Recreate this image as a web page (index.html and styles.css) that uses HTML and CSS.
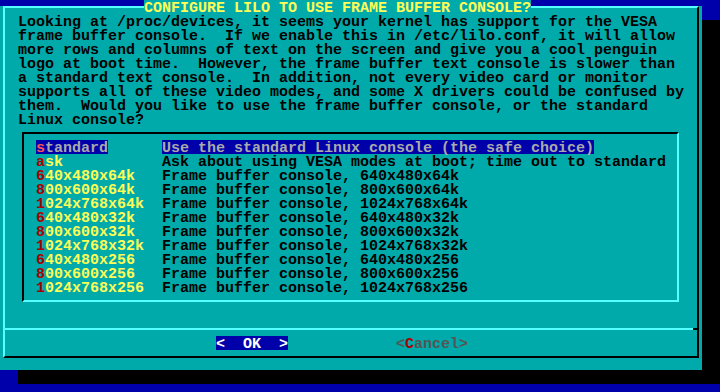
FILE: index.html
```html
<!DOCTYPE html>
<html lang="en">
<head>
  <meta charset="UTF-8">
  <title>Configure LILO</title>
  <link rel="stylesheet" href="styles.css">
</head>
<body>
  <div class="screen">
    <div class="dialog">
      <div class="frame">
        <h1 class="title">CONFIGURE LILO TO USE FRAME BUFFER CONSOLE?</h1>

        <div class="body">
          <p class="prompt">Looking at /proc/devices, it seems your kernel has support for the VESA
frame buffer console.  If we enable this in /etc/lilo.conf, it will allow
more rows and columns of text on the screen and give you a cool penguin
logo at boot time.  However, the frame buffer text console is slower than
a standard text console.  In addition, not every video card or monitor
supports all of these video modes, and some X drivers could be confused by
them.  Would you like to use the frame buffer console, or the standard
Linux console?</p>

          <div class="menu">
            <ul class="items">
              <li class="item selected"><span class="tag"><span class="label"><b class="key">s</b>tandard</span></span><span class="desc">Use the standard Linux console (the safe choice)</span></li>
              <li class="item"><span class="tag"><span class="label"><b class="key">a</b>sk</span></span><span class="desc">Ask about using VESA modes at boot; time out to standard</span></li>
              <li class="item"><span class="tag"><span class="label"><b class="key">6</b>40x480x64k</span></span><span class="desc">Frame buffer console, 640x480x64k</span></li>
              <li class="item"><span class="tag"><span class="label"><b class="key">8</b>00x600x64k</span></span><span class="desc">Frame buffer console, 800x600x64k</span></li>
              <li class="item"><span class="tag"><span class="label"><b class="key">1</b>024x768x64k</span></span><span class="desc">Frame buffer console, 1024x768x64k</span></li>
              <li class="item"><span class="tag"><span class="label"><b class="key">6</b>40x480x32k</span></span><span class="desc">Frame buffer console, 640x480x32k</span></li>
              <li class="item"><span class="tag"><span class="label"><b class="key">8</b>00x600x32k</span></span><span class="desc">Frame buffer console, 800x600x32k</span></li>
              <li class="item"><span class="tag"><span class="label"><b class="key">1</b>024x768x32k</span></span><span class="desc">Frame buffer console, 1024x768x32k</span></li>
              <li class="item"><span class="tag"><span class="label"><b class="key">6</b>40x480x256</span></span><span class="desc">Frame buffer console, 640x480x256</span></li>
              <li class="item"><span class="tag"><span class="label"><b class="key">8</b>00x600x256</span></span><span class="desc">Frame buffer console, 800x600x256</span></li>
              <li class="item"><span class="tag"><span class="label"><b class="key">1</b>024x768x256</span></span><span class="desc">Frame buffer console, 1024x768x256</span></li>
            </ul>
          </div>
        </div>

        <div class="sep"></div>

        <div class="buttons">
          <span class="btn active">&lt;  <b class="key">O</b>K  &gt;</span>
          <span class="btn">&lt;<b class="key">C</b>ancel&gt;</span>
        </div>
      </div>
    </div>
  </div>
</body>
</html>
```

FILE: styles.css
```css
html, body { margin: 0; padding: 0; }
body { background: #0000aa; font-family: "Liberation Mono", "DejaVu Sans Mono", monospace; font-size: 15px; font-weight: bold; line-height: 14px; color: #000; }

.screen { width: 720px; height: 392px; overflow: hidden; }

/* dialog window + its shadow */
.dialog { width: 702px; height: 364px; background: #00aaaa; box-shadow: 18px 14px 0 #000; }
.frame { position: relative; box-sizing: border-box; height: 352px; margin: 6px 3px; border: 2px solid #000; border-top-color: #55ffff; border-left-color: #55ffff; }

/* single text rows: 14px cell, baseline pushed down like the console font */
.title, .item, .label, .desc, .btn { height: 14px; line-height: 18px; }

.title { position: absolute; left: 139px; top: -8px; margin: 0; font-size: 15px; font-weight: bold; color: #ffff55; background: #00aaaa; }

.body { padding: 8px 0 0 13px; }
.prompt { margin: 0; white-space: pre; }

/* list box */
.menu { box-sizing: border-box; width: 657px; height: 170px; margin: 4px 0 0 4px; padding: 6px 0 6px 12px; border: 2px solid #55ffff; border-top-color: #000; border-left-color: #000; }
.items { list-style: none; margin: 0; padding: 0; }
.item { display: flex; white-space: pre; }
.tag { flex: none; width: 126px; }
.label, .desc { display: inline-block; vertical-align: top; }
.label { color: #ffff55; }
.key { font-weight: inherit; color: #aa0000; }
.selected .label, .selected .desc { background: #0000aa; color: #aaaaaa; }
.selected .key { color: #ff5555; }

.sep { height: 2px; margin-top: 26px; background: #55ffff; border-right: 4px solid #000; }

.buttons { display: flex; gap: 108px; margin-top: 6px; padding-left: 211px; white-space: pre; }
.btn { display: inline-block; color: #555555; }
.btn .key { color: #aa0000; }
.btn.active { background: #0000aa; color: #ffffff; }
.btn.active .key { color: #ffffff; }
```
